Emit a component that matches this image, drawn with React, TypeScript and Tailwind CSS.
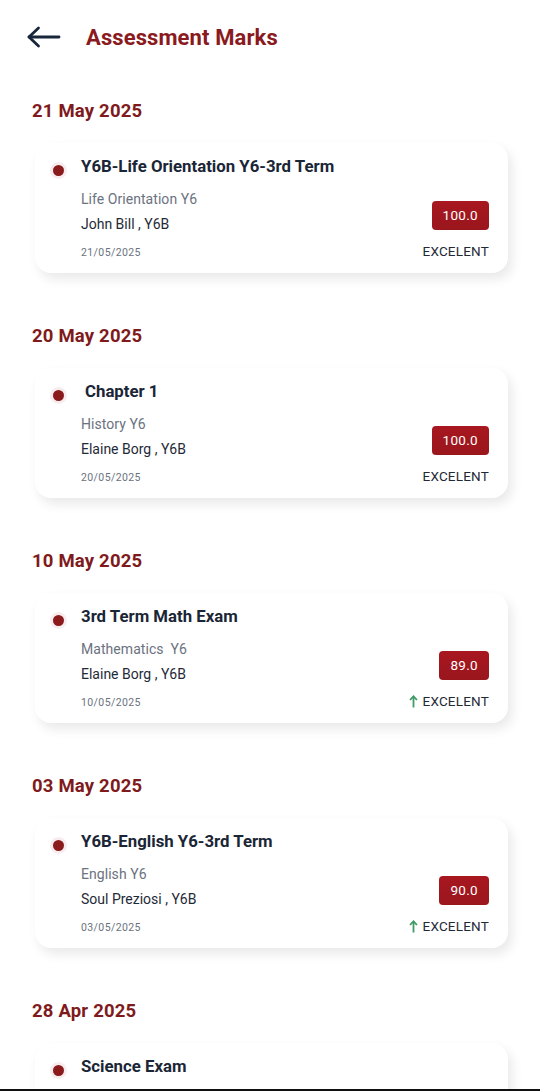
import React from "react";

type Item = {
  date: string;
  title: string;
  titleIndent?: boolean;
  subject: string;
  teacher: string;
  day: string;
  mark: string;
  trend?: boolean;
  partial?: boolean;
};

const items: Item[] = [
  { date: "21 May 2025", title: "Y6B-Life Orientation Y6-3rd Term", subject: "Life Orientation Y6", teacher: "John Bill , Y6B", day: "21/05/2025", mark: "100.0" },
  { date: "20 May 2025", title: "Chapter 1", titleIndent: true, subject: "History Y6", teacher: "Elaine Borg , Y6B", day: "20/05/2025", mark: "100.0" },
  { date: "10 May 2025", title: "3rd Term Math Exam", subject: "Mathematics  Y6", teacher: "Elaine Borg , Y6B", day: "10/05/2025", mark: "89.0", trend: true },
  { date: "03 May 2025", title: "Y6B-English Y6-3rd Term", subject: "English Y6", teacher: "Soul Preziosi , Y6B", day: "03/05/2025", mark: "90.0", trend: true },
  { date: "28 Apr 2025", title: "Science Exam", subject: "", teacher: "", day: "", mark: "", partial: true },
];

function Card({ it }: { it: Item }) {
  return (
    <div className="ml-[35px] w-[473px] rounded-[16px] bg-white shadow-[4px_6px_12px_rgba(0,0,0,0.09)] flex">
      <div className="flex-1 flex pt-[13px] pb-[13px]">
        <div className="w-[46px] flex justify-center pt-[9px]">
          <div className="w-[11px] h-[11px] rounded-full bg-[#8a1a1c] shadow-[0_0_0_3px_rgba(160,30,35,0.08)] ml-[1px]" />
        </div>
        <div className="flex flex-col">
          <div className={`text-[16.8px] leading-[20px] font-bold text-[#1a2636] ${it.titleIndent ? "pl-[4px]" : ""}`}>
            {it.title}
          </div>
          {!it.partial && (
            <>
              <div className="mt-[14px] text-[14px] leading-[18px] text-[#6b7280] tracking-[0.05px] whitespace-pre">
                {it.subject}
              </div>
              <div className="mt-[7px] text-[14px] leading-[18px] text-[#1f2a37]">
                {it.teacher}
              </div>
              <div className="mt-[13px] text-[10.5px] leading-[14px] text-[#6b7280] tracking-[0.4px]">
                {it.day}
              </div>
            </>
          )}
        </div>
      </div>
      {!it.partial && (
        <div className="flex flex-col items-end pr-[19px] pt-[58px]">
          <div className="h-[29px] px-[11px] rounded-[4px] bg-gradient-to-b from-[#a8171f] to-[#9a161d] text-white text-[13.5px] flex items-center tracking-[0.3px]">
            {it.mark}
          </div>
          <div className="mt-[13px] h-[16px] flex items-center gap-[5px] text-[13.5px] text-[#1f2a37] tracking-[0.2px]">
            {it.trend && (
              <svg width="9" height="13" viewBox="0 0 9 13" fill="none">
                <path d="M4.5 12.5V1.5" stroke="#3f9a63" strokeWidth="1.8" />
                <path d="M1 5L4.5 1.3L8 5" stroke="#3f9a63" strokeWidth="1.8" fill="none" />
              </svg>
            )}
            <span>EXCELENT</span>
          </div>
        </div>
      )}
      {it.partial && <div className="h-[60px]" />}
    </div>
  );
}

export default function App() {
  return (
    <div
      className="w-[540px] h-[1091px] overflow-hidden bg-white relative"
      style={{ fontFamily: "Roboto, 'Noto Sans', sans-serif" }}
    >
      <div className="h-[74px] flex items-center">
        <div className="pl-[27px] w-[86px]">
          <svg width="34" height="22" viewBox="0 0 34 22" fill="none">
            <path d="M2 11H32" stroke="#17263a" strokeWidth="2.8" strokeLinecap="round" />
            <path d="M11.5 2L2 11L11.5 20" stroke="#17263a" strokeWidth="2.8" strokeLinecap="round" strokeLinejoin="round" />
          </svg>
        </div>
        <div className="text-[22px] font-bold text-[#8a1a1e] tracking-[0.1px]">Assessment Marks</div>
      </div>
      <div className="pt-[25px] flex flex-col">
        {items.map((it, i) => (
          <div key={i} className="mb-[51px]">
            <div className="pl-[32px] text-[18.5px] leading-[24px] font-bold text-[#7f1a1c] tracking-[0.2px]">
              {it.date}
            </div>
            <div className="mt-[20px]">
              <Card it={it} />
            </div>
          </div>
        ))}
      </div>
      <div className="absolute left-0 right-0 bottom-0 h-[2px] bg-[#111]" />
    </div>
  );
}
